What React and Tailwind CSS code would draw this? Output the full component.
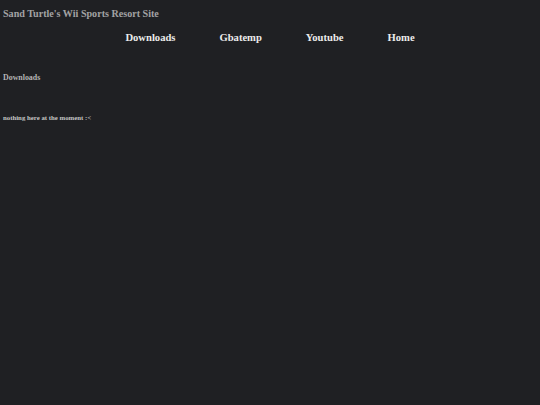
export default function App() {
  const links = ['Downloads', 'Gbatemp', 'Youtube', 'Home'];
  return (
    <div className="min-h-screen bg-[#1f2023] font-['Liberation_Serif',serif] font-bold">
      <header className="px-[3px] pt-[7px]">
        <h1 className="text-[10.1px] leading-[14px] text-[#a3a3a3]">Sand Turtle's Wii Sports Resort Site</h1>
      </header>
      <nav className="mt-[10px] flex justify-center gap-[44px]">
        {links.map((l) => (
          <a key={l} href="#" className="text-[10.6px] leading-[14px] text-[#ececec]">
            {l}
          </a>
        ))}
      </nav>
      <main className="px-[3px]">
        <h2 className="mt-[28px] text-[7.9px] leading-[10px] text-[#b4b4b4]">Downloads</h2>
        <p className="mt-[30px] text-[6.8px] leading-[9px] text-[#c4c4c4]">nothing here at the moment :&lt;</p>
      </main>
    </div>
  );
}
